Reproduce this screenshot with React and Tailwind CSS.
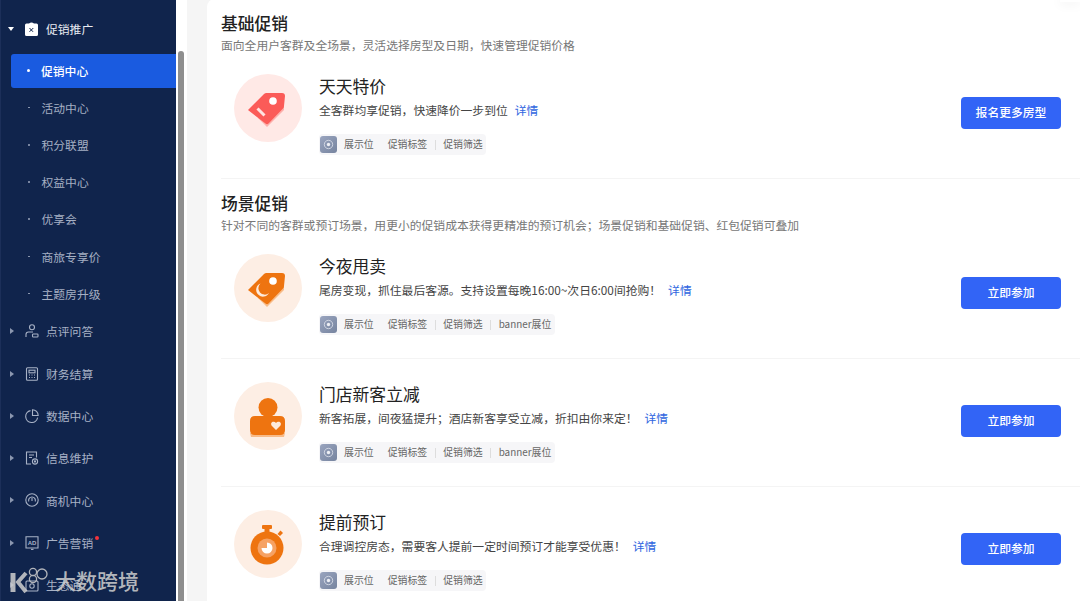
const subMenus = ["促销中心", "活动中心", "积分联盟", "权益中心", "优享会", "商旅专享价", "主题房升级"];

const lineProps = {
  width: 14,
  height: 14,
  viewBox: "0 0 14 14",
  fill: "none",
  stroke: "currentColor",
  strokeWidth: 1.1,
};

const ReviewIcon = () => (
  <svg {...lineProps}>
    <circle cx="7" cy="3.2" r="2.5" />
    <path d="M1 13V10.5Q1 8 3.5 8H8" />
    <rect x="7.5" y="10" width="5.5" height="3" rx="0.8" />
  </svg>
);

const FinanceIcon = () => (
  <svg {...lineProps}>
    <rect x="1.5" y="0.8" width="11" height="12.4" rx="1" />
    <rect x="4" y="3.2" width="6" height="2.6" />
    <path d="M4 8H5M6.5 8H7.5M9 8H10M4 10.5H5M6.5 10.5H7.5M9 10.5H10" />
  </svg>
);

const DataIcon = () => (
  <svg {...lineProps}>
    <path d="M5.5 1.6A6 6 0 1 0 12.6 8.6" />
    <path d="M7.5 0.8A5.7 5.7 0 0 1 13.2 6.5H7.5Z" />
  </svg>
);

const InfoIcon = () => (
  <svg {...lineProps}>
    <path d="M6 13H1.5V1H11.5V6.5" />
    <path d="M4 4H9M4 6.5H7" />
    <circle cx="10" cy="10.5" r="2.6" />
    <circle cx="10" cy="10.5" r="0.6" />
  </svg>
);

const ChanceIcon = () => (
  <svg {...lineProps}>
    <circle cx="7" cy="7" r="6.2" />
    <path d="M3.8 8.5A3.4 3.4 0 1 1 10.2 8.5" />
    <path d="M7 5V8" />
  </svg>
);

const AdIcon = () => (
  <svg {...lineProps}>
    <path d="M1 0.8H13V12H1Z" />
    <path d="M6 13.4H8.5" />
    <text x="7" y="8.8" fontSize="6" fontWeight="700" fill="currentColor" stroke="none" textAnchor="middle" fontFamily="Liberation Sans">AD</text>
  </svg>
);

const EcoIcon = () => (
  <svg {...lineProps}>
    <rect x="1" y="3" width="12" height="10" rx="1" />
    <circle cx="7" cy="8" r="2.2" />
  </svg>
);

const menuGroups = [
  { label: "点评问答", Icon: ReviewIcon },
  { label: "财务结算", Icon: FinanceIcon },
  { label: "数据中心", Icon: DataIcon },
  { label: "信息维护", Icon: InfoIcon },
  { label: "商机中心", Icon: ChanceIcon },
  { label: "广告营销", Icon: AdIcon, dot: true },
  { label: "生态通", Icon: EcoIcon },
];

const TagShape = ({ color, light }) => (
  <>
    <path d="M24 44L33 53L50 36L50 30Z" fill={light} />
    <path
      d="M14 36L30 20Q31 19 32.5 19H48Q51 19 51 22L50 32Q50 33.5 49 34.5L34.5 49.5Q33 51 31.5 49.5L14 36Z"
      fill={color}
    />
    <circle cx="39" cy="27" r="3.8" fill="#fff" />
  </>
);

const RedTagIcon = () => (
  <svg width="68" height="68" viewBox="0 0 68 68">
    <circle cx="34" cy="34" r="34" fill="#ffe9e6" />
    <TagShape color="#fb5b58" light="#fdb0ab" />
    <path d="M23.5 34.5L30.5 41.5" stroke="#ffe4e1" strokeWidth="3" />
  </svg>
);

const OrangeTagIcon = () => (
  <svg width="68" height="68" viewBox="0 0 68 68">
    <circle cx="34" cy="34" r="34" fill="#fdeee4" />
    <TagShape color="#ee7410" light="#f8bb88" />
    <path d="M26.5 29.5A6.8 6.8 0 1 0 35 39A6 6 0 0 1 26.5 29.5Z" fill="#fdeadb" />
  </svg>
);

const PersonIcon = () => (
  <svg width="68" height="68" viewBox="0 0 68 68">
    <circle cx="34" cy="34" r="34" fill="#fdeee4" />
    <circle cx="34" cy="25.5" r="9.5" fill="#ee7410" />
    <path d="M17 55H50L51 51H16Z" fill="#f8bb88" />
    <path d="M21 34H46Q51 34 51 39V48Q51 53 46 53H21Q16 53 16 48V39Q16 34 21 34Z" fill="#ee7410" />
    <path d="M42 48L37.5 43.5Q36.3 41 38.6 39.8Q40.8 39.2 42 41Q43.2 39.2 45.4 39.8Q47.7 41 46.5 43.5Z" fill="#fdeadb" />
  </svg>
);

const WatchIcon = () => (
  <svg width="68" height="68" viewBox="0 0 68 68">
    <circle cx="34" cy="34" r="34" fill="#fdeee4" />
    <rect x="28" y="15" width="10" height="4" rx="1" fill="#ee7410" />
    <rect x="30.5" y="18" width="5" height="5" fill="#ee7410" />
    <path d="M43.5 24L46.5 20.5L49 23L46 26Z" fill="#ee7410" />
    <circle cx="33" cy="38" r="16.5" fill="#ee7410" />
    <circle cx="33" cy="38" r="9.5" fill="#f6a264" />
    <path d="M33 32.5A5.5 5.5 0 1 1 27.5 38H33Z" fill="#fff" />
  </svg>
);

const ChipIcon = () => (
  <span className="flex h-[17px] w-[17px] items-center justify-center rounded-[3px] bg-gradient-to-br from-[#9aa5bf] to-[#76849f]">
    <svg width="11" height="11" viewBox="0 0 11 11" fill="none">
      <circle cx="5.5" cy="5.5" r="4.2" stroke="#dfe3ec" strokeWidth="0.8" />
      <circle cx="5.5" cy="5.5" r="1.7" fill="#eef0f5" />
    </svg>
  </span>
);

const promos = {
  base: [
    {
      title: "天天特价",
      desc: "全客群均享促销，快速降价一步到位",
      Icon: RedTagIcon,
      action: "报名更多房型",
    },
  ],
  scene: [
    {
      title: "今夜甩卖",
      desc: "尾房变现，抓住最后客源。支持设置每晚16:00~次日6:00间抢购！",
      Icon: OrangeTagIcon,
      action: "立即参加",
      banner: true,
    },
    {
      title: "门店新客立减",
      desc: "新客拓展，间夜猛提升；酒店新客享受立减，折扣由你来定！",
      Icon: PersonIcon,
      action: "立即参加",
      banner: true,
    },
    {
      title: "提前预订",
      desc: "合理调控房态，需要客人提前一定时间预订才能享受优惠！",
      Icon: WatchIcon,
      action: "立即参加",
    },
  ],
};

const SectionHead = ({ title, desc }) => (
  <div className="h-[52px] pl-[14px] pt-[11px]">
    <h2 className="text-[16.8px] font-medium leading-[26px] text-[#222]">{title}</h2>
    <p className="mt-px text-[11.8px] leading-[16px] text-[#777]">{desc}</p>
  </div>
);

const PromoRow = ({ promo }) => {
  const { Icon } = promo;

  return (
    <div className="ml-[14px] flex h-[128px] shrink-0 items-start border-b border-[#f4f4f4] pl-[13px] pr-[19px] pt-[23px]">
      <Icon />
      <div className="ml-[17px] flex-1">
        <h3 className="text-[16.8px] leading-[24px] text-[#222]">{promo.title}</h3>
        <p className="mt-[3px] text-[11.8px] leading-[18px] text-[#444]">
          {promo.desc}
          <span className="ml-[7px] text-[#2f66e0]">详情</span>
        </p>
        <div className="mt-[15px] flex h-[21px] w-fit items-center rounded-[4px] bg-[#f6f6f8] pr-[3px] text-[9.9px] text-[#666]">
          <span className="ml-px">
            <ChipIcon />
          </span>
          <span className="ml-[7px]">展示位</span>
          <span className="ml-[14px]">促销标签</span>
          <span className="mx-[7.5px] h-[10px] w-px bg-[#ddd]" />
          <span>促销筛选</span>
          {promo.banner && (
            <>
              <span className="mx-[7.5px] h-[10px] w-px bg-[#ddd]" />
              <span className="mr-[1px]">banner展位</span>
            </>
          )}
        </div>
      </div>
      <button
        type="button"
        className="mt-[23px] h-[32px] w-[100px] rounded-[4px] bg-[#3264f6] pb-[2px] text-[11.8px] font-medium text-white"
      >
        {promo.action}
      </button>
    </div>
  );
};

const Sidebar = () => (
  <aside className="h-full w-[176px] shrink-0 border-l border-[#1c2f59] bg-[#10244c] text-[11.8px]">
    <div className="mt-[8px] flex h-[42px] items-center text-[#e8ebf2]">
      <span className="ml-[7px] h-0 w-0 border-x-[3px] border-t-[4px] border-x-transparent border-t-white" />
      <svg className="ml-[11px]" width="13" height="14" viewBox="0 0 13 14">
        <path d="M4 1.5Q6.5 -0.5 9 1.5H11.5Q13 1.5 13 3V12.5Q13 14 11.5 14H1.5Q0 14 0 12.5V3Q0 1.5 1.5 1.5Z" fill="#fff" />
        <path d="M4.5 6L8 9.8M8.3 6L4.5 9.8" stroke="#10244c" strokeWidth="1" />
      </svg>
      <span className="ml-[8px]">促销推广</span>
    </div>

    <ul className="mb-[-2px] mt-[2px]">
      {subMenus.map((menu, index) => (
        <li key={menu} className="flex h-[37.17px] items-center pl-[10px]">
          {index === 0 ? (
            <div className="flex h-[34px] flex-1 items-center rounded-l-[3px] bg-[#1a5be0] font-medium text-white">
              <span className="ml-[16px] h-[3px] w-[3px] rounded-full bg-white" />
              <span className="ml-[11px]">{menu}</span>
            </div>
          ) : (
            <>
              <span className="ml-[17px] h-[1.5px] w-[1.5px] rounded-full bg-[#9aa5bb]" />
              <span className="ml-[12px] text-[#a5afc3]">{menu}</span>
            </>
          )}
        </li>
      ))}
    </ul>

    {menuGroups.map(({ label, Icon, dot }) => (
      <div key={label} className="flex h-[42.3px] items-center text-[#a8b2c6]">
        <span className="ml-[9px] h-0 w-0 border-y-[3px] border-l-[4px] border-y-transparent border-l-[#8b97b0]" />
        <span className="ml-[11px] flex">
          <Icon />
        </span>
        <span className="ml-[7px]">{label}</span>
        {dot && <span className="mb-[9px] ml-[2px] h-[4px] w-[4px] rounded-full bg-[#f4333c]" />}
      </div>
    ))}
  </aside>
);

const Watermark = () => (
  <div className="absolute left-[10px] top-[567px] flex items-center text-[#cfcfcf] opacity-85">
    <svg width="38" height="27" viewBox="0 0 38 27" fill="none" stroke="currentColor">
      <path d="M3 6V25" strokeWidth="5" />
      <path d="M16 6L8 15L16 25" strokeWidth="4" />
      <circle cx="23" cy="5" r="3.6" strokeWidth="1.3" />
      <circle cx="23" cy="12" r="3.6" strokeWidth="1.3" />
      <circle cx="32" cy="7" r="5" strokeWidth="1.3" />
    </svg>
    <span className="ml-[7px] text-[21px] font-medium leading-[27px]">大数跨境</span>
  </div>
);

const App = () => {
  return (
    <div
      className="relative flex h-[601px] w-[1080px] overflow-hidden bg-white"
      style={{ fontFamily: '"Noto Sans CJK SC", "Noto Sans", sans-serif' }}
    >
      <Sidebar />

      <div className="h-full w-[11px] shrink-0 bg-white">
        <div className="ml-[2px] mt-[51px] h-[560px] w-[6px] rounded-full bg-[#8e8e8e]" />
      </div>

      <div className="h-full flex-1 bg-[#f5f5f5] pl-[20px]">
        <main className="-mt-px flex h-[610px] flex-col rounded-tl-[8px] bg-white">
          <SectionHead title="基础促销" desc="面向全用户客群及全场景，灵活选择房型及日期，快速管理促销价格" />
          {promos.base.map((promo) => (
            <PromoRow key={promo.title} promo={promo} />
          ))}
          <SectionHead title="场景促销" desc="针对不同的客群或预订场景，用更小的促销成本获得更精准的预订机会；场景促销和基础促销、红包促销可叠加" />
          {promos.scene.map((promo) => (
            <PromoRow key={promo.title} promo={promo} />
          ))}
        </main>
      </div>

      <div className="absolute right-0 top-0 h-[2px] w-[20px] bg-white shadow-[0_0_12px_rgba(0,0,0,0.18)]" />
      <Watermark />
    </div>
  );
};

export default App;
